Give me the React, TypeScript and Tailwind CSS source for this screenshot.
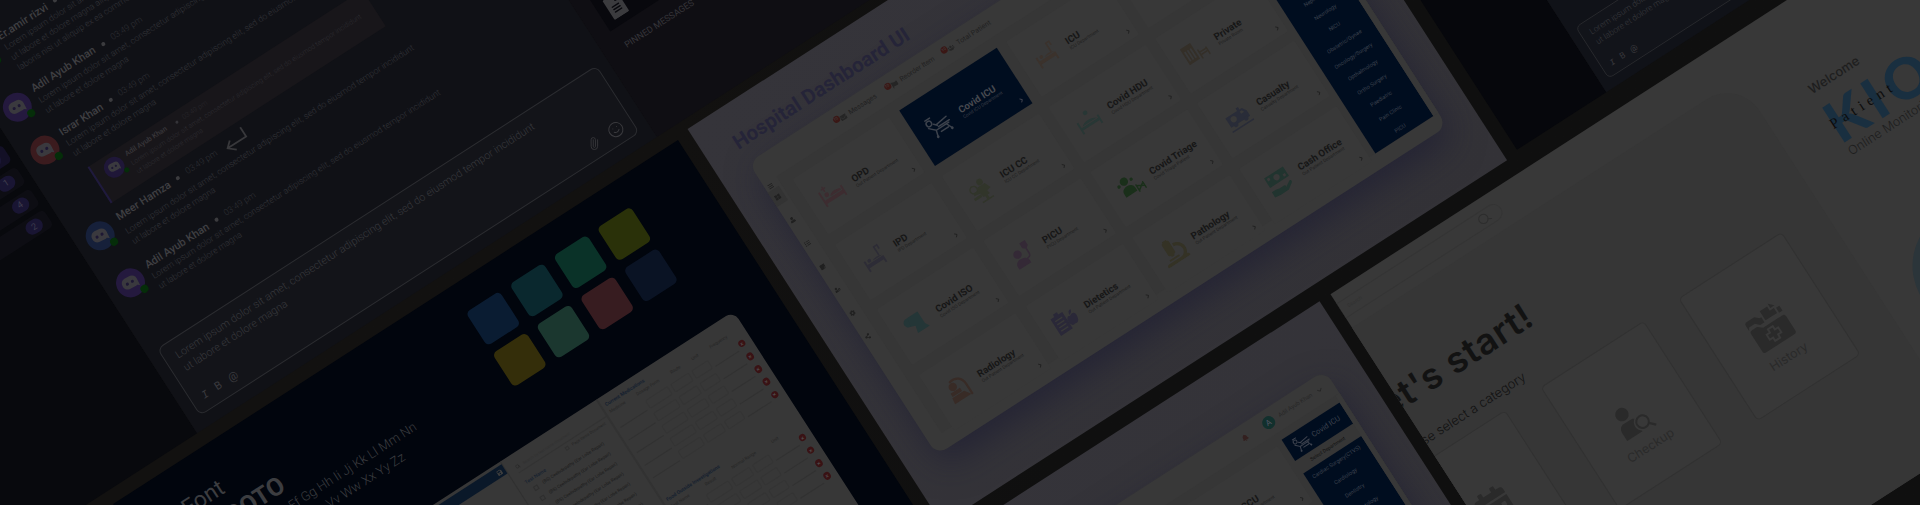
import React from 'react';
import {
  FaMicroscope, FaUser, FaList, FaThLarge, FaBars, FaStickyNote, FaUserCog, FaCog, FaShareAlt, FaUsers,
  FaEnvelope, FaFlag, FaCalendarAlt, FaBell, FaSave, FaFileAlt,
} from 'react-icons/fa';
import { ChevronRight, ChevronDown, Paperclip, Smile, Search } from 'lucide-react';

const LOREM = 'Lorem ipsum dolor sit amet, consectetur adipiscing elit, sed do eiusmod tempor incididunt';
const LOREM2 = 'ut labore et dolore magna';

function Avatar({ color, small }: { color: string; small?: boolean }) {
  return (
    <div className={`relative shrink-0 rounded-full flex items-center justify-center ${small ? 'size-[21px]' : 'size-[29px]'} ${color}`}>
      <svg viewBox="0 0 20 16" className={`rotate-[6deg] ${small ? 'w-[13px]' : 'w-[18px]'}`}>
        <path d="M6.5 1h7A6 6 0 0 1 19 7v8.2L16.200 13.400A6 6 0 0 1 13.500 14h-7A5.800 5.800 0 0 1 1 7.500 6 6 0 0 1 6.500 1z" fill="#3a393e" />
        <circle cx="6.800" cy="8" r="1.700" fill="#1d1733" />
        <circle cx="13.200" cy="7.600" r="1.700" fill="#1d1733" />
      </svg>
      <span className={`absolute rounded-full bg-[#052d09] ${small ? 'size-[5.500px] right-[-1px] bottom-[-1px]' : 'size-[8px] right-[2px] bottom-[-2px]'}`} />
    </div>
  );
}

function Message({ name, color, height, lines, inset }: { name: string; color: string; height: string; lines: string[]; inset?: boolean }) {
  return (
    <div className={`flex gap-2 pl-[10.500px] ${height}`}>
      <Avatar color={color} />
      <div className={`whitespace-nowrap ${inset ? 'pl-[2px]' : ''}`}>
        <div className={`flex items-center gap-2 pt-px ${inset ? 'h-[19px] pb-[4px]' : 'h-[15px]'}`}>
          <span className="text-[11px] leading-[13px] font-medium text-[#3f3f42]">{name}</span>
          <span className="size-1 rounded-full bg-[#3b3b3e]" />
          <span className="text-[8.800px] font-light text-[#2d2e33]">03:49 pm</span>
        </div>
        {lines.map((l) => (
          <p key={l} className="text-[8.700px] leading-[12px] font-light text-[#323338]">{l}</p>
        ))}
      </div>
    </div>
  );
}

function SideRow({ n, active }: { n: string; active?: boolean }) {
  return (
    <div className={`flex h-5 w-[220px] items-center justify-end rounded-[5px] pr-2 ${active ? 'bg-[#131026]' : 'bg-[#0d0d13]'}`}>
      <span className="flex h-[14px] w-[18px] items-center justify-center rounded-full bg-[#191533] text-[9px] text-[#3d3b4c]">{n}</span>
    </div>
  );
}

function ChatPanel({ tint }: { tint?: boolean }) {
  return (
    <div className="flex h-[471px] font-[Roboto,sans-serif]">
      <aside className={`flex shrink-0 flex-col items-end gap-[5.800px] overflow-hidden pr-[8px] pt-[122px] ${tint ? 'w-[138px] bg-[#06070c]' : 'w-[238px] bg-[#08090d]'}`}>
        <SideRow n="5" active />
        <SideRow n="1" />
        <SideRow n="4" />
        <SideRow n="2" />
      </aside>
      <main className={`relative w-[547px] shrink-0 pt-[22px] ${tint ? 'bg-[#101218]' : 'bg-[#101116]'}`}>
        <Message name="Er.amir rizvi" color="bg-[#24193e]" height="h-[62.500px]" lines={[LOREM, 'ut labore et dolore magna aliqua. Ut enim ad minim veniam, quis nostrud', 'laboris nisi ut aliquip ex ea commodo consequat.']} />
        <Message name="Adil Ayub Khan" color="bg-[#24193e]" height="h-[51.500px]" lines={[LOREM, LOREM2]} />
        <Message name="Israr Khan" color="bg-[#3b1b1e]" height="h-[52px]" lines={[LOREM, LOREM2]} />
        <div className="ml-[52px] mb-[7px] flex h-[43px] w-[327px] gap-[6px] border-l-2 border-[#1f1a3d] bg-[#18161a] pl-[10px] pt-[4px]">
          <Avatar small color="bg-[#1f1738]" />
          <div className="whitespace-nowrap">
            <div className="flex h-[12px] items-center gap-[10px]">
              <span className="text-[7.200px] font-medium text-[#38373b]">Adil Ayub Khan</span>
              <span className="size-[3px] rounded-full bg-[#343338]" />
              <span className="-ml-1 text-[7px] font-light text-[#28272c]">03:49 pm</span>
            </div>
            <p className="pt-px text-[6.950px] leading-[9.600px] font-light text-[#2d2c31]">{LOREM}</p>
            <p className="text-[6.950px] leading-[9.600px] font-light text-[#2d2c31]">{LOREM2}</p>
          </div>
        </div>
        <Message inset name="Meer Hamza" color="bg-[#16203a]" height="h-[56px]" lines={[LOREM, LOREM2]} />
        <Message name="Adil Ayub Khan" color="bg-[#24193e]" height="h-[84px]" lines={[LOREM, LOREM2]} />
        <svg viewBox="0 0 26 20" className="absolute left-[178px] top-[236px] w-[26px]" fill="none" stroke="#38383b" strokeWidth="1.800">
          <path d="M24 1v11H2M8 6.500 2 12l7 6" />
        </svg>
        <div className={`ml-[12px] flex h-[80px] w-[523px] flex-col justify-between rounded-[7px] border border-[#2b2c30] pl-[11.500px] pr-[9px] pt-[8px] pb-[6px] ${tint ? 'bg-[#12141a]' : 'bg-[#131419]'}`}>
          <div className="whitespace-nowrap text-[10.820px] leading-[15px] font-light text-[#38393d]">
            <p>{LOREM}</p>
            <p>{LOREM2}</p>
          </div>
          <div className="flex items-center justify-between text-[#3a3a3e]">
            <div className="flex items-center gap-[9px] text-[11px] leading-[14px]">
              <span className="font-[Liberation_Mono,monospace] italic">I</span>
              <span>B</span>
              <span>@</span>
            </div>
            <div className="flex items-center gap-[11px]">
              <Paperclip size={13} strokeWidth={1.500} className="-rotate-[12deg]" />
              <Smile size={17} strokeWidth={1.400} />
            </div>
          </div>
        </div>
      </main>
      <aside className="w-[285px] shrink-0 bg-[#0f0e13] pl-[18px]">
        <div className="flex h-[357px] items-end gap-[8px] bg-[#08080d] pl-[7px] pb-[7px]">
          <FaFileAlt size={23} className="text-[#3b3b3e]" />
          <span className="pb-1 text-[8px] text-[#14142e]">123 KB</span>
        </div>
        <p className="pl-[5px] pt-[15px] text-[9.050px] leading-[11px] text-[#36353a]">PINNED MESSAGES</p>
      </aside>
    </div>
  );
}

const SWATCHES = [
  'bg-[#0a1c32]', 'bg-[#0a282e]', 'bg-[#0a3228]', 'bg-[#2a3109]',
  'bg-[#342e0a]', 'bg-[#1b372f]', 'bg-[#371c20]', 'bg-[#0a1324]',
];

function FieldRows({ count }: { count: number }) {
  return (
    <div className="flex flex-col">
      {Array.from({ length: count }, (_, i) => (
        <div key={i} className="flex h-[15.200px] items-center gap-[3px]">
          <span className="h-[10px] w-[32px] border-b border-[#313131]" />
          <span className="h-[10px] w-[27px] rounded-[2px] border border-[#343434]" />
          <span className="h-[10px] w-[22px] rounded-[2px] border border-[#343434]" />
          <span className="h-[10px] w-[20px] rounded-[2px] border border-[#343434]" />
          <span className="h-[10px] w-[28px] border-b border-[#313131]" />
          <span className="ml-auto flex size-[7.500px] items-center justify-center rounded-full bg-[#391214] text-[6px] leading-none text-[#555]">×</span>
        </div>
      ))}
    </div>
  );
}

function StylePanel() {
  return (
    <div className="relative h-[470px] w-[672px] overflow-hidden bg-[#01050d] font-[Roboto,sans-serif] text-[#3c3d40]">
      <div className="flex items-start justify-between pl-[56px] pr-[76px] pt-[30px]">
        <div className="whitespace-nowrap">
          <p className="text-[23px] leading-[27px]">Font</p>
          <p className="mt-[2px] text-[25px] leading-[30px] font-bold">ROBOTO</p>
          <p className="text-[13px] leading-[18.500px] font-light">Aa Bb Cc Dd Ee Ff Gg Hh Ii Jj Kk Ll Mm Nn</p>
          <p className="text-[13px] leading-[18.500px] font-light">Oo Pp Qq Rr Ss Tt Uu Vv Ww Xx Yy Zz</p>
        </div>
        <div className="grid grid-cols-4 gap-x-[12px] gap-y-[8.500px]">
          {SWATCHES.map((s) => <div key={s} className={`size-[40px] rounded-[5px] ${s}`} />)}
        </div>
      </div>
      <div className="absolute left-[20px] top-[174px] flex h-[330px] w-[606px] overflow-hidden rounded-[9px] bg-[#373737] text-[#242424]">
        <div className="w-[330px] border-r border-[#303030] pt-[3px]">
          <div className="flex h-[11px] items-center justify-end bg-[#0a1829] pr-[3px] text-[#3d3d3d]"><FaSave size={6} /></div>
        </div>
        <div className="w-[115px] border-r-2 border-[#323232] pl-[9px] pt-[8px]">
          <div className="flex h-[12px] items-center gap-1 border-b border-[#323232]"><Search size={5} /><span className="text-[4px] text-[#303030]">Search by test name document</span></div>
          <div className="flex items-center justify-end gap-1 pt-[2px] pr-1 text-[4px]"><span className="size-[4px] border border-[#303030]" />Page Items Document</div>
          <p className="text-[5px] font-medium text-[#15202f]">Test Name</p>
          {Array.from({ length: 22 }, (_, i) => (
            <div key={i} className="flex h-[12px] items-center gap-[6px] whitespace-nowrap pl-[4px] text-[4.500px] text-[#1a1a1a]">
              <span className="size-[5px] border border-[#2e2e2e]" />(BS) Ceelodepathy (Ear Lobe Repair)
            </div>
          ))}
        </div>
        <div className="grow pl-[4px] pr-[7px] pt-[5px]">
          <p className="text-[5px] leading-[8px] font-bold text-[#15202f]">Current Medications</p>
          <div className="flex h-[11px] items-center justify-between pr-[12px] text-[4.500px]"><span>Medicine</span><span>Dosage Form</span><span>Route</span><span>Unit</span><span>Frequency</span></div>
          <FieldRows count={5} />
          <p className="mt-[18px] text-[5px] leading-[9px] font-bold text-[#15202f]">Food Outside Investigations</p>
          <div className="flex h-[9px] items-center justify-between pr-[24px] text-[4.500px]"><span>Test Name</span><span>Result</span><span>Normal Range</span><span>Unit</span></div>
          <FieldRows count={4} />
        </div>
      </div>
    </div>
  );
}

type IconProps = { size?: number; className?: string };
type IconType = React.ComponentType<IconProps>;

function glyph(children: React.ReactNode): IconType {
  return function Glyph({ size = 26, className }: IconProps) {
    return (
      <svg viewBox="0 0 28 28" width={size} height={size} className={className} fill="currentColor" stroke="none">
        {children}
      </svg>
    );
  };
}

const line = { fill: 'none', stroke: 'currentColor', strokeWidth: 1.6, strokeLinecap: 'round' as const };

const BedWithPatient = glyph(<>
  <path d="M1 6h2v18H1zM25 12h2v12h-2zM3 17h22v4H3z" />
  <circle cx="8" cy="12.500" r="2.500" />
  <path d="M11 15c3-3 8-3 13-1v2H11z" />
  <path d="M8 8V3M6 5h4" {...line} />
</>);

const Recliner = glyph(<>
  <circle cx="5" cy="8" r="3" {...line} />
  <path d="M3 3h6M2 12l6 6h16M11 13l14-2M12 16h14M8 18l-2 7M21 18l3 7M12 22h9M9 11l3 3" {...line} />
  <circle cx="6" cy="25" r="1.500" />
  <circle cx="24" cy="25" r="1.500" />
</>);

const BedWithStand = glyph(<>
  <path d="M2 11h2v13H2zM4 16h20v4H4zM22 18h2v6h-2z" />
  <circle cx="8" cy="13" r="2" />
  <path d="M11 15c3-2 8-2 12 0z" />
  <path d="M20 13V3h4v4" {...line} />
</>);

const CareBed = glyph(<>
  <path d="M1 10h2v14H1zM3 17h22v3H3zM24 14h2v10h-2zM5 16c4-4 12-4 18 0z" />
  <circle cx="15" cy="5" r="2.500" />
</>);

const Checkup = glyph(<>
  <circle cx="7" cy="10" r="4" {...line} />
  <circle cx="17" cy="6" r="3.500" />
  <path d="M12 10h9l3 7-5 1 1 4h-8l-1-5-7-1 1-3h6zM2 18h9v3H2zM14 22h3v4h-3zM8 26h14v1.500H8z" />
</>);

const Wardrobe = glyph(<>
  <path d="M1 3h13v20H1zM3 8v12h2V8zM6.500 8v12h2V8zM10 8v12h2V8z" fillRule="evenodd" />
  <path d="M17 14v10M17 20h9M26 16v8M17 17h9" {...line} />
</>);

const Gown = glyph(<>
  <circle cx="7" cy="9" r="5" />
  <path d="M9 4h13v15l3 5H10l2-8-5-2z" />
</>);

const Drip = glyph(<>
  <circle cx="9" cy="11" r="4.500" />
  <path d="M2 26v-3c0-4 3-6 7-6s8 2 8 6v3zM17 2h7v6l-3.500 3L17 8z" />
  <path d="M20.500 11v5c0 3-2 4-4 4" {...line} />
</>);

const Triage = glyph(<>
  <circle cx="10" cy="7" r="4.500" />
  <path d="M3 23v-4c0-4 3-6 7-6s7 2 7 6v4z" />
  <circle cx="2.500" cy="9" r="1.800" />
  <circle cx="18" cy="9" r="1.800" />
  <path d="M19 18l7 4M19 24l7-5M19 17v8M27 18v7" {...line} />
</>);

const Van = glyph(<>
  <path fillRule="evenodd" d="M2 9h15v-3h3v3h3l3 5v7H2zM9 11a3.500 3.500 0 1 0 .01 0zM19 11v3h4l-1.500-3z" />
  <circle cx="8" cy="21" r="2.500" />
  <circle cx="21" cy="21" r="2.500" />
  <path d="M1 26h26" {...line} />
</>);

const Scan = glyph(<>
  <circle cx="10" cy="9" r="4.500" />
  <path d="M4 14h12v4H4zM3 19h15l5 7H2z" />
  <path d="M10 3c8-2 14 3 14 11v12" {...line} strokeWidth={2.400} />
</>);

const Diet = glyph(<>
  <path fillRule="evenodd" d="M1 5h5V2h5v3h5v21H1zM4 9v1.500h9V9zM4 13v1.500h9V13zM4 17v1.500h9V17zM4 21v1.500h9V21z" />
  <path d="M21 13c5-3 7 1 6 5-1 5-3 6-6 5-3 1-5-1-5-5 0-4 2-7 5-5zM21 12c0-3 1-5 4-5 0 3-2 4-4 5z" />
</>);

const Cash = glyph(<>
  <path fillRule="evenodd" d="M2 2h24v12H2zM14 4.500a3.500 3.500 0 1 0 .01 0zM4 4v3h3V4zM21 9v3h3V9z" />
  <path d="M1 19h5l4 1h6c2 0 2 2.500 0 2.500h-4 5l7-4c2 0 2 2 1 3l-7 5H8l-7-1z" />
</>);

type Dept = { name: string; sub: string; icon: IconType; color: string; active?: boolean };

const DEPTS: Dept[] = [
  { name: 'OPD', sub: 'Out Patient Department', icon: BedWithPatient, color: 'text-[#3d2c30]' },
  { name: 'Covid ICU', sub: 'Covid ICU Department', icon: Recliner, color: 'text-[#3c424c]', active: true },
  { name: 'ICU', sub: 'ICU Department', icon: BedWithStand, color: 'text-[#3b322c]' },
  { name: 'ICCU', sub: 'ICCU Department', icon: CareBed, color: 'text-[#2e3438]' },
  { name: 'IPD', sub: 'IPD Department', icon: BedWithStand, color: 'text-[#2d2c36]' },
  { name: 'ICU CC', sub: 'ICU CC Department', icon: Checkup, color: 'text-[#31352a]' },
  { name: 'Covid HDU', sub: 'Covid HDU Department', icon: CareBed, color: 'text-[#283735]' },
  { name: 'Private', sub: 'Private Room', icon: Wardrobe, color: 'text-[#342f28]' },
  { name: 'Covid ISO', sub: 'Covid ISO Department', icon: Gown, color: 'text-[#243637]' },
  { name: 'PICU', sub: 'PICU Department', icon: Drip, color: 'text-[#342936]' },
  { name: 'Covid Triage', sub: 'Covid Triage Patient', icon: Triage, color: 'text-[#1a2f1a]' },
  { name: 'Casualty', sub: 'Casualty Department', icon: Van, color: 'text-[#292c38]' },
  { name: 'Radiology', sub: 'Out Patient Department', icon: Scan, color: 'text-[#382b26]' },
  { name: 'Dietetics', sub: 'Out Patient Department', icon: Diet, color: 'text-[#2a2838]' },
  { name: 'Pathology', sub: 'Out Patient Department', icon: FaMicroscope, color: 'text-[#343225]' },
  { name: 'Cash Office', sub: 'Out Patient Department', icon: Cash, color: 'text-[#21342f]' },
];

const LIST = [
  'Cardiac Surgery(CTVS)', 'Cardiology', 'Dentistry', 'Dermatology', 'ENT', 'Nephrology', 'Neurology', 'NICU',
  'Obstetric/Gynae', 'Oncology/Surgery', 'Opthalmology', 'Ortho Surgery', 'Paediatric', 'Pain Clinic', 'PICU',
];

const SIDE_ICONS = [FaThLarge, FaUser, FaList, FaStickyNote, FaUserCog, FaCog, FaShareAlt];

function HeaderItem({ label, width, icon: Icon }: { label: string; width: string; icon: IconType }) {
  return (
    <div className={`flex items-center ${width}`}>
      <span className="mb-[5px] flex size-[7px] items-center justify-center rounded-full bg-[#3a1715] text-[4px] text-[#444]">10</span>
      <Icon size={7} className="mr-[4px] text-[#252525]" />
      <span className="whitespace-nowrap text-[7px] text-[#212121]">{label}</span>
    </div>
  );
}

function HospitalPanel() {
  return (
    <div className="h-[470px] w-[672px] overflow-hidden bg-linear-to-br from-[#35343a] to-[#333237] pl-[32.500px] pt-[26px] font-[Roboto,sans-serif]">
      <h1 className="h-[35px] -ml-px text-[20.500px] leading-[24px] font-bold whitespace-nowrap text-[#252438]">Hospital Dashboard UI</h1>
      <div className="h-[348px] w-[607px] rounded-[12px] bg-[#383838] shadow-[0_14px_34px_0_rgba(26,26,50,0.6)]">
        <header className="flex h-[27px] items-center pl-[94px] pr-[11px]">
          <HeaderItem label="Messages" width="w-[61px]" icon={FaEnvelope} />
          <HeaderItem label="Reorder Item" width="w-[67.500px]" icon={FaFlag} />
          <HeaderItem label="Total Patient" width="w-[70px]" icon={FaUsers} />
          <div className="ml-auto flex items-center">
            <FaBell size={7} className="mr-[18px] text-[#33201f]" />
            <span className="mr-[6px] flex size-[12.500px] items-center justify-center rounded-full bg-[#12302d] text-[8px] text-[#556]">A</span>
            <span className="text-[5.900px] text-[#272727]">Adil Ayub Khan</span>
            <ChevronDown size={8} className="ml-[5px] text-[#222]" />
          </div>
        </header>
        <div className="flex h-[305px]">
          <nav className="flex w-[16px] flex-col items-center pr-[3px] text-[#202020]">
            <span className="flex h-[9px] items-center"><FaBars size={6} /></span>
            {SIDE_ICONS.map((Icon, i) => (
              <span key={i} className={`flex w-full shrink-0 items-center justify-center ${i === 0 ? 'mb-[5.500px] h-[17px] bg-[#333]' : 'h-[27.700px]'}`}>
                <Icon size={6} />
              </span>
            ))}
          </nav>
          <div className="flex grow bg-[#363636] pl-[12px]">
            <div className="grid h-[298.500px] w-[497.500px] shrink-0 grid-cols-4 grid-rows-4 gap-x-[11.200px] gap-y-[11.500px] pt-[11px] box-content">
              {DEPTS.map((d) => (
                <div key={d.name} className={`relative flex items-center ${d.active ? 'bg-[#000d1f]' : 'rounded-[2px] bg-[#383838]'}`}>
                  <div className={`flex w-[50.500px] shrink-0 justify-center pl-[3px] ${d.color}`}><d.icon size={26} /></div>
                  <div className="pt-[5px] whitespace-nowrap">
                    <p className={`text-[9.700px] leading-[10px] font-bold ${d.active ? 'text-[#47494f]' : 'text-[#161616]'}`}>{d.name}</p>
                    <p className={`text-[4.700px] leading-[6px] ${d.active ? 'text-[#3a3d47]' : 'text-[#1e1e1e]'}`}>{d.sub}</p>
                  </div>
                  <ChevronRight size={7} strokeWidth={2.500} className={`absolute bottom-[5px] right-[4px] ${d.active ? 'text-[#50525a]' : 'text-[#1c1c1c]'}`} />
                </div>
              ))}
            </div>
            <aside className="ml-[7px] mt-[8px] h-[297px] w-[69px] shrink-0 text-center text-[#3c424e]">
              <div className="flex h-[25px] items-center justify-center gap-[3px] bg-[#000d1f]">
                <Recliner size={18} />
                <span className="text-[7.500px]">Covid ICU</span>
              </div>
              <p className="h-[15px] text-[4.900px] leading-[15px] text-[#101010]">Select Department</p>
              <div className="h-[257px] bg-[#000d1f]">
                {LIST.map((l) => <p key={l} className="h-[17.200px] text-[5.500px] leading-[17.200px] whitespace-nowrap">{l}</p>)}
              </div>
            </aside>
            <div className="grow bg-[#383838]" />
          </div>
        </div>
      </div>
    </div>
  );
}

function KioskCard({ label, children }: { label: string; children: React.ReactNode }) {
  return (
    <div className="flex h-[146px] w-[123px] shrink-0 flex-col items-center rounded-[5px] border border-[#313131] bg-[#383838] text-[#2a2a2a]">
      <div className="flex h-[98px] items-end justify-center pb-1">{children}</div>
      <p className="text-[12.500px] leading-[20px]">{label}</p>
    </div>
  );
}

function KioskPanel() {
  return (
    <div className="relative h-[470px] w-[760px] overflow-hidden bg-[#383838] font-[Inter,sans-serif]">
      <div className="-ml-px mt-[11px] flex h-[18px] w-[191px] items-center justify-between rounded-r-full border border-[#343434] pl-2 pr-[12px]">
        <span className="text-[5px] text-[#303030]">Search</span>
        <Search size={14} strokeWidth={1.700} className="rotate-[-15deg] text-[#2d2d2d]" />
      </div>
      <div className="-ml-[60px] mt-[11px] h-[430px] w-[520px] rounded-tr-[38px] bg-[#363636]">
        <div className="flex w-[217px] justify-end pt-[63px]">
          <h2 className="text-[36px] leading-[40px] font-semibold tracking-[0.700px] whitespace-nowrap text-[#121212]">Let's start!</h2>
        </div>
        <div className="flex w-[179px] justify-end pt-[21px]">
          <p className="text-[13px] leading-[18px] font-light whitespace-nowrap text-[#121212]">Please select a category</p>
        </div>
        <div className="flex gap-[41.500px] pl-[21px] pt-[10px]">
          <KioskCard label="Booking"><FaCalendarAlt size={38} /></KioskCard>
          <KioskCard label="Checkup">
            <svg viewBox="0 0 40 40" className="w-[36px]" fill="currentColor">
              <circle cx="12" cy="9" r="7.500" />
              <path d="M1 37V27c0-5 3-8 7-8h8c3 0 4 .5 5 1.500a9.500 9.500 0 0 0 0 15.500v1z" />
              <circle cx="27" cy="28" r="7" fill="none" stroke="currentColor" strokeWidth="2.200" />
              <path d="m32 33 6 6" stroke="currentColor" strokeWidth="2.600" />
            </svg>
          </KioskCard>
          <KioskCard label="History">
            <svg viewBox="0 0 44 44" className="w-[43px]" fill="currentColor">
              <path d="M2 14V8c0-2 1-3 3-3h9l4 4h2v6h-5l-4-4H4zM22 3h9v5h5v6H22zM33 1l5 5h-5zM38 9h4v6h-4z" />
              <path d="M2 18c0-2 1-3 3-3h6l5 4h23c2 0 3 1 3 3v17c0 2-1 3-3 3H5c-2 0-3-1-3-3z" />
              <path d="M19 23h6v4h4v6h-4v4h-6v-4h-4v-6h4z" fill="none" stroke="#383838" strokeWidth="2" />
            </svg>
          </KioskCard>
        </div>
      </div>
      <div className="absolute left-[513px] top-[80.500px] whitespace-nowrap text-[#1e1e1e]">
        <p className="text-[13px] leading-[17px] font-medium">Welcome</p>
        <p className="-ml-[3px] mt-[6px] font-[Lato,sans-serif] text-[57px] leading-[52px] font-black tracking-[5.500px] text-[#192f40]">KIOSK</p>
        <p className="absolute left-[-1px] top-[41px] font-[Liberation_Serif,serif] text-[15px] leading-[16px] tracking-[4.900px] text-[#0c0c0c]">Patient</p>
        <p className="-mt-px text-[12.500px] leading-[16px] font-light">Online Monitoring</p>
      </div>
      <div className="absolute left-[495px] top-[264px] size-[120px] rounded-full bg-[#2b353a]" />
    </div>
  );
}

export default function App() {
  return (
    <div className="relative h-[505px] w-[1920px] overflow-hidden bg-linear-to-r from-[#121110] from-35% to-[#0f0f0f] to-55%">
      <div className="absolute left-0 top-0 origin-top-left -rotate-[32.8deg]">
        <div className="absolute left-[-307px] top-0"><ChatPanel /></div>
        <div className="absolute left-[-178px] top-[485px]"><StylePanel /></div>
        <div className="absolute left-[508px] top-[481px]"><HospitalPanel /></div>
        <div className="absolute left-[273.500px] top-[968px]"><HospitalPanel /></div>
        <div className="absolute left-[959px] top-[967.500px]"><KioskPanel /></div>
        <div className="absolute left-[1194px] top-[585px] origin-top-left scale-[0.77]"><ChatPanel tint /></div>
      </div>
    </div>
  );
}
